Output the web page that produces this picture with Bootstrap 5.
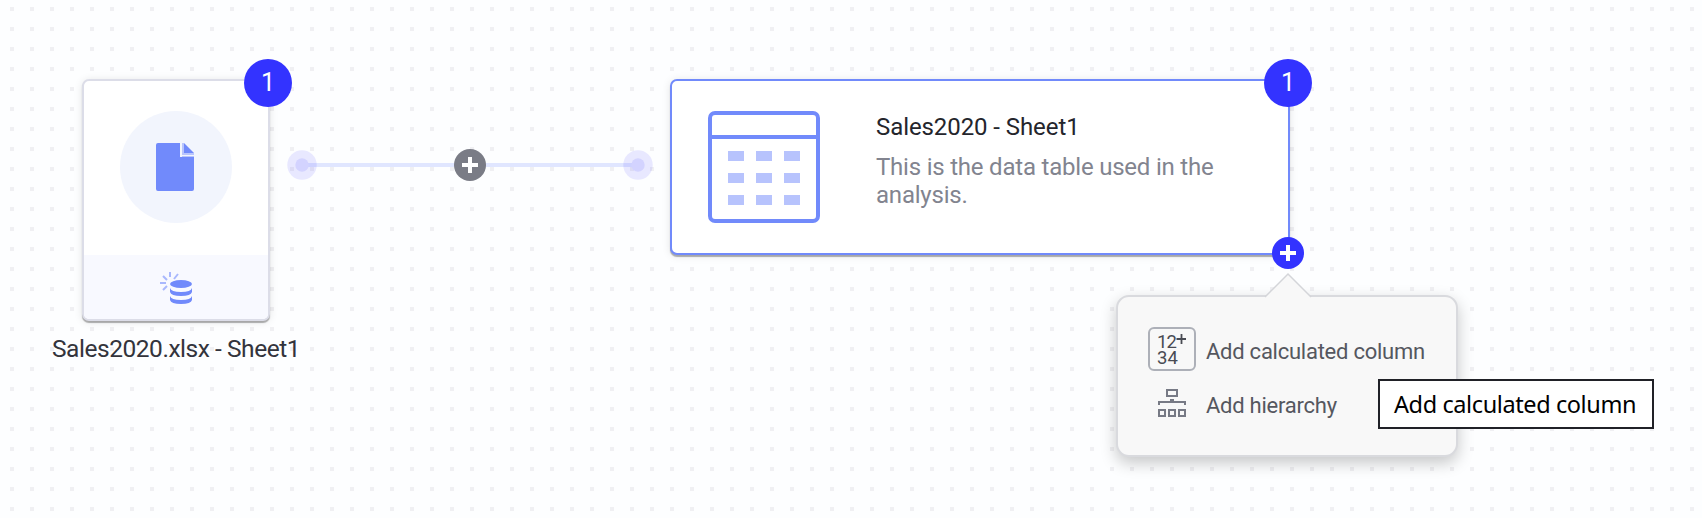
<!DOCTYPE html>
<html lang="en">
<head>
<meta charset="utf-8">
<meta name="viewport" content="width=device-width, initial-scale=1">
<title>Data canvas</title>
<link rel="stylesheet" href="https://cdn.jsdelivr.net/npm/bootstrap@5.3.0/dist/css/bootstrap.min.css">
<style>
  :root { --accent: #718afb; --strong: #3333ff; }
  body { font-family: Roboto, "Liberation Sans", sans-serif; background: #fdfeff; }
  .canvas { width: 1702px; height: 518px; background: #fdfeff; }
  .dots { left: 0; top: 0; }
  .node { border-radius: 7px; border: 2px solid #dcdde8; background: #fff; box-shadow: 0 2px 1px rgba(0,0,0,.3), 0 1px 8px rgba(0,0,0,.10); }
  .source { left: 82px; top: 79px; width: 188px; height: 242px; }
  .source-top { height: 174px; padding-top: 30px; }
  .source-foot { background: #f8f9ff; border-radius: 0 0 5px 5px; padding-top: 17px; }
  .disc { width: 112px; height: 112px; background: #f2f5fd; }
  .file-icon { margin-right: 2px; }
  .table-node { left: 670px; top: 79px; width: 620px; height: 176px; border-color: var(--accent); padding: 30px 36px; }
  .counter { top: 59px; width: 48px; height: 48px; background: var(--strong); color: #fff; font-size: 25px; line-height: 47px; }
  .counter-source { left: 244px; }
  .counter-table { left: 1264px; }
  .connector { left: 286px; top: 149px; }
  .plus { left: 1272px; top: 237px; width: 32px; height: 32px; }
  .caption-text { left: 52px; top: 332px; font-size: 24.5px; line-height: 34px; color: #33343c; letter-spacing: -.46px; }
  .copy { margin-left: 56px; width: 370px; }
  .copy-title { font-size: 24px; line-height: 28px; color: #24252c; margin-top: 2px; letter-spacing: -.08px; }
  .copy-text { font-size: 24px; line-height: 28px; color: #82848f; margin-top: 12px; letter-spacing: -.21px; }
  .add-menu { left: 1116px; top: 295px; width: 342px; height: 162px; padding: 30px; border: 2px solid #d9dade; border-radius: 13px; background: #f8f8f8; box-shadow: 0 6px 16px rgba(0,0,0,.22); }
  .arrow { left: 146px; top: -25px; }
  .entry { font-size: 22px; line-height: 26px; color: #55575f; gap: 10px; letter-spacing: -.25px; }
  .entry + .entry { margin-top: 10px; }
  .entry-label { padding-top: 5px; }
  .entry-icon { width: 48px; height: 44px; border: 2px solid transparent; border-radius: 6px; }
  .entry-icon svg { overflow: visible; }
  .entry-icon.picked { border-color: #adb0b8; }
  .hint { left: 1378px; top: 379px; width: 276px; height: 50px; border: 2px solid #202127; background: #fff; color: #000; font: 23.5px/47px "Noto Sans", "Open Sans", sans-serif; letter-spacing: -.4px; padding-left: 14px; }
</style>
</head>
<body>
<main class="canvas position-relative overflow-hidden">
  <svg class="dots position-absolute" width="1702" height="518" aria-hidden="true">
    <defs><pattern id="grid" width="20" height="20" patternUnits="userSpaceOnUse"><rect x="10" y="7" width="4" height="4" fill="#f0f0f3"/></pattern></defs>
    <rect width="1702" height="518" fill="url(#grid)"/>
  </svg>

  <svg class="connector position-absolute" width="368" height="32" viewBox="0 0 368 32" aria-hidden="true">
    <path d="M16 16H352" stroke="#e0e6ff" stroke-width="4"/>
    <g fill="#3f33ff" fill-opacity=".11"><circle cx="16" cy="16" r="14.7"/><circle cx="352" cy="16" r="14.7"/></g>
    <g fill="#d3d3ff"><circle cx="16" cy="16" r="6.7"/><circle cx="352" cy="16" r="6.7"/></g>
    <circle cx="184" cy="16" r="16" fill="#7a7c86"/>
    <path d="M176 16h16M184 8v16" stroke="#fff" stroke-width="4"/>
  </svg>

  <section class="node source position-absolute d-flex flex-column">
    <div class="source-top d-flex justify-content-center align-items-start">
      <div class="disc rounded-circle d-flex justify-content-center align-items-center">
        <svg class="file-icon" width="38" height="48" viewBox="0 0 38 48"><path d="M2 0H24V14H38V46Q38 48 36 48H2Q0 48 0 46V2Q0 0 2 0Z" fill="#718afb"/><path d="M26 0h2v10h10v4H26z" fill="#b9c5fd"/><path d="M24 0h2v12h12v1H24z" fill="#f2f5fd"/><path d="M28 0L38 10H28Z" fill="#718afb"/></svg>
      </div>
    </div>
    <div class="source-foot flex-fill d-flex justify-content-center">
      <svg width="32" height="32" viewBox="0 0 32 32">
        <g fill="#718afb"><ellipse cx="21" cy="12" rx="11" ry="4"/>
        <path d="M10 16q1 4 11 4t11-4v4q-1 4-11 4t-11-4zM10 24q1 4 11 4t11-4v4q-1 4-11 4t-11-4z"/></g>
        <path d="M0 11h6M3 4l4 4M10 0v5M18 2l-4 5M3 18l4-4" stroke="#a9b8fd" stroke-width="2" fill="none"/>
      </svg>
    </div>
  </section>
  <div class="counter counter-source position-absolute rounded-circle text-center">1</div>
  <div class="caption-text position-absolute text-nowrap">Sales2020.xlsx - Sheet1</div>

  <section class="node table-node position-absolute d-flex align-items-start">
    <svg class="flex-shrink-0" width="112" height="112" viewBox="0 0 112 112">
      <rect x="2" y="2" width="108" height="108" rx="5" fill="#fff" stroke="#718afb" stroke-width="4"/>
      <path d="M2 26H110" stroke="#718afb" stroke-width="4"/>
      <path d="M20 45h16m12 0h16m12 0h16M20 67h16m12 0h16m12 0h16M20 89h16m12 0h16m12 0h16" stroke="#b7c3fd" stroke-width="10"/>
    </svg>
    <div class="copy">
      <div class="copy-title">Sales2020 - Sheet1</div>
      <div class="copy-text">This is the data table used in the analysis.</div>
    </div>
  </section>
  <div class="counter counter-table position-absolute rounded-circle text-center">1</div>
  <svg class="plus position-absolute" viewBox="0 0 32 32"><circle cx="16" cy="16" r="16" fill="#3333ff"/><path d="M8 16h16M16 8v16" stroke="#fff" stroke-width="4"/></svg>

  <section class="add-menu position-absolute d-flex flex-column">
    <svg class="arrow position-absolute" width="48" height="27" viewBox="0 0 48 27"><path d="M1 25L24 2L47 25V27H1Z" fill="#f8f8f8"/><path d="M1 25L24 2L47 25" fill="none" stroke="#d4d5d9" stroke-width="1.5"/></svg>
    <div class="entry d-flex align-items-center">
      <span class="entry-icon picked flex-shrink-0 d-flex justify-content-center align-items-center">
        <svg width="28" height="30" viewBox="0 0 28 30"><text font-family="Roboto" font-size="18.5" letter-spacing="0" fill="#494b53"><tspan x="-1 8.5" y="14">12</tspan><tspan x="-1 9.5" y="30">34</tspan></text><path d="M18.500 5h9.500M23.500 0v10" stroke="#494b53" stroke-width="1.800"/></svg>
      </span>
      <span class="entry-label text-nowrap">Add calculated column</span>
    </div>
    <div class="entry d-flex align-items-center">
      <span class="entry-icon flex-shrink-0 d-flex justify-content-center align-items-center">
        <svg width="28" height="28" viewBox="0 0 28 28" fill="none" stroke="#777a85" stroke-width="2"><path d="M9 1h10v6H9zM1 21h6v6H1zM11 21h6v6h-6zM21 21h6v6h-6zM1 16v-3h26v3M12 11h4"/></svg>
      </span>
      <span class="entry-label text-nowrap">Add hierarchy</span>
    </div>
  </section>

  <div class="hint position-absolute text-nowrap">Add calculated column</div>
</main>
<script src="https://cdn.jsdelivr.net/npm/bootstrap@5.3.0/dist/js/bootstrap.bundle.min.js"></script>
</body>
</html>
